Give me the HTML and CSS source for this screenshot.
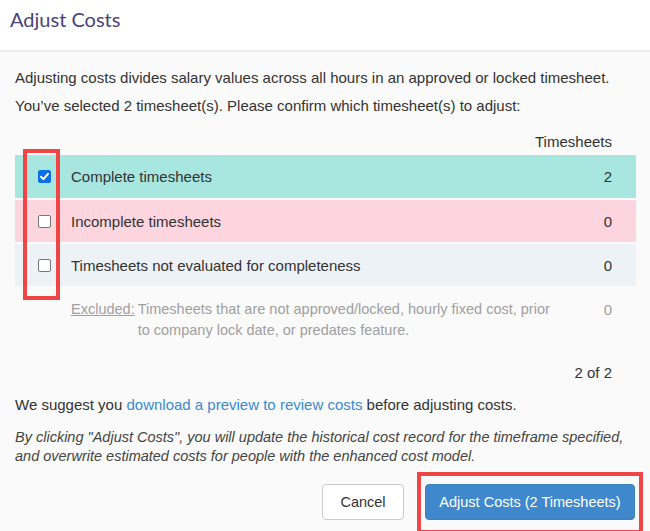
FILE: index.html
```html
<!DOCTYPE html>
<html>
<head>
<meta charset="utf-8">
<link rel="stylesheet" href="styles.css">
</head>
<body>
<div class="modal">
  <div class="modal-header">
    <h1 class="title">Adjust Costs</h1>
  </div>
  <div class="modal-body">
    <p class="intro">Adjusting costs divides salary values across all hours in an approved or locked timesheet.</p>
    <p class="intro">You’ve selected 2 timesheet(s). Please confirm which timesheet(s) to adjust:</p>
    <div class="col-head">Timesheets</div>
    <div class="rows">
      <div class="row row-complete">
        <span class="check-cell"><span class="cb cb-checked"><svg viewBox="0 0 13 13" width="13" height="13"><path d="M3 6.8 L5.4 9.1 L10 3.9" fill="none" stroke="#fff" stroke-width="2" stroke-linecap="round" stroke-linejoin="round"/></svg></span></span>
        <span class="label">Complete timesheets</span>
        <span class="count">2</span>
      </div>
      <div class="row row-incomplete">
        <span class="check-cell"><span class="cb"></span></span>
        <span class="label">Incomplete timesheets</span>
        <span class="count">0</span>
      </div>
      <div class="row row-unknown">
        <span class="check-cell"><span class="cb"></span></span>
        <span class="label">Timesheets not evaluated for completeness</span>
        <span class="count">0</span>
      </div>
      <div class="row row-excluded">
        <span class="check-cell"></span>
        <span class="label excluded"><span class="ex-tag">Excluded:</span><span class="ex-text">Timesheets that are not approved/locked, hourly fixed cost, prior to company lock date, or predates feature.</span></span>
        <span class="count">0</span>
      </div>
    </div>
    <div class="total">2 of 2</div>
    <p class="suggest">We suggest you <a class="link" href="#">download a preview to review costs</a> before adjusting costs.</p>
    <p class="note">By clicking "Adjust Costs", you will update the historical cost record for the timeframe specified, and overwrite estimated costs for people with the enhanced cost model.</p>
    <div class="actions">
      <button class="btn btn-cancel">Cancel</button>
      <button class="btn btn-primary">Adjust Costs (2 Timesheets)</button>
    </div>
  </div>
  <div class="mark mark-checks"></div>
  <div class="mark mark-button"></div>
</div>
</body>
</html>
```

FILE: styles.css
```css
html, body {
  margin: 0;
  padding: 0;
}
body {
  width: 650px;
  height: 531px;
  overflow: hidden;
  background: #fafafa;
  font-family: "Liberation Sans", Arial, sans-serif;
  font-size: 15px;
  color: #333;
}
.modal {
  position: relative;
  height: 531px;
}
.modal-header {
  height: 52px;
  background: #fff;
  border-bottom: 2px solid #ececec;
  box-sizing: border-box;
  padding: 6px 10px 0;
}
.title {
  margin: 0;
  font-family: Lato, "Open Sans", sans-serif;
  font-weight: 400;
  font-size: 20px;
  line-height: 26px;
  color: #4a4278;
}
.modal-body {
  padding: 0 14px 0 15px;
}
.intro {
  margin: 0;
  line-height: 20px;
}
.intro:first-child {
  padding-top: 16px;
}
.intro + .intro {
  margin-top: 8px;
}
.col-head {
  text-align: right;
  padding-right: 24px;
  margin-top: 16px;
  line-height: 20px;
  height: 23px;
}
.rows {
  display: flex;
  flex-direction: column;
  gap: 2px;
}
.row {
  display: flex;
  align-items: center;
  height: 42px;
}
.row-complete { background: #a8e6e0; height: 43px; }
.row-incomplete { background: #fdd5df; }
.row-unknown { background: #edf2f6; }
.check-cell {
  width: 56px;
  display: flex;
  justify-content: center;
  padding-left: 2px;
  box-sizing: border-box;
}
.cb {
  width: 13px;
  height: 13px;
  box-sizing: border-box;
  border: 1px solid #767676;
  border-radius: 2px;
  background: #fff;
  display: block;
}
.cb-checked {
  background: #0b6fe8;
  border-color: #0b6fe8;
}
.cb-checked svg {
  display: block;
  margin: -1px;
}
.label {
  flex: 1;
}
.count {
  padding-right: 24px;
}
.row-excluded {
  align-items: flex-start;
  height: auto;
  padding-top: 11px;
  color: #a0a0a0;
  font-size: 14.5px;
}
.excluded {
  display: flex;
  line-height: 21px;
}
.ex-tag {
  text-decoration: underline;
  margin-right: 3px;
}
.ex-text {
  width: 416px;
}
.row-excluded .count {
  line-height: 21px;
  font-size: 15px;
}
.total {
  text-align: right;
  padding-right: 24px;
  margin-top: 22px;
  line-height: 20px;
}
.suggest {
  margin: 12px 0 0;
  line-height: 20px;
}
.link {
  color: #3a8bcf;
  text-decoration: none;
}
.note {
  margin: 13px 0 0;
  font-style: italic;
  font-size: 14.5px;
  line-height: 19px;
  color: #444;
}
.actions {
  display: flex;
  justify-content: flex-end;
  gap: 21px;
  margin-top: 18px;
  padding-right: 1px;
}
.btn {
  font-family: "Liberation Sans", Arial, sans-serif;
  font-size: 14.5px;
  height: 36px;
  border-radius: 4px;
  box-sizing: border-box;
}
.btn-cancel {
  width: 82px;
  background: #fff;
  border: 1px solid #ccc;
  color: #333;
}
.btn-primary {
  width: 210px;
  background: #3f88cc;
  border: 1px solid #3a7fc0;
  color: #fff;
}
.mark {
  position: absolute;
  border: 4px solid #f04545;
  box-sizing: border-box;
}
.mark-checks {
  left: 23px;
  top: 149px;
  width: 37px;
  height: 151px;
}
.mark-button {
  left: 417px;
  top: 472px;
  width: 226px;
  height: 62px;
}
```
